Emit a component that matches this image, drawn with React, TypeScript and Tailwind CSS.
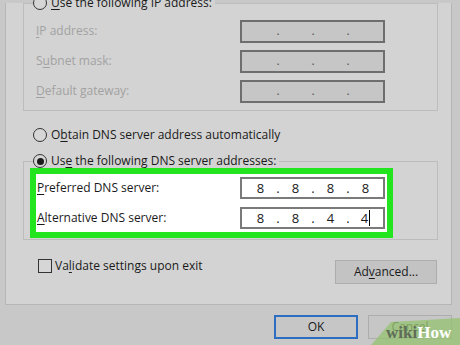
import React from "react";

function Radio({ checked }: { checked?: boolean }) {
  return (
    <span className="flex h-[14px] w-[14px] shrink-0 items-center justify-center rounded-full border border-[#333333] bg-[#d6d6d6]">
      {checked && <span className="h-[7px] w-[7px] rounded-full bg-[#1a1a1a]" />}
    </span>
  );
}

function U({ children }: { children: React.ReactNode }) {
  return <span className="underline decoration-1 underline-offset-2">{children}</span>;
}

function IpBox({ values, disabled }: { values: string[]; disabled?: boolean }) {
  return (
    <div
      className={
        disabled
          ? "flex h-[23px] w-[145px] items-center border-2 border-[#6e6e6e] bg-[#c6c6c6] pl-[1px] text-[#555555]"
          : "flex h-[22px] w-[145px] items-center border-2 border-[#7a7a7a] bg-white pl-[1px] text-[13px] text-[#1a1a1a]"
      }
    >
      {values.map((v, i) => (
        <React.Fragment key={i}>
          {i > 0 && <span className="flex w-0 justify-center leading-[16px]">.</span>}
          <span className="relative flex w-[35px] justify-center leading-[16px]">
            {v}
            {!disabled && i === 3 && values[3] === "4" && values[2] === "4" && (
              <span className="ml-[1px] h-[16px] w-[1px] bg-black" />
            )}
          </span>
        </React.Fragment>
      ))}
    </div>
  );
}

export default function App() {
  return (
    <div className="relative h-[345px] w-[460px] overflow-hidden bg-[#c8c8c8] font-['Open_Sans',sans-serif] text-[12px] leading-[16px] text-[#1a1a1a]">
      <div className="ml-[5px] h-[302px] w-[447px] border-x border-b border-[#b6b6b6] bg-[#d3d3d3]">
        {/* IP group */}
        <div className="ml-[17px] mt-[3px] h-[108px] w-[415px] border border-[#bcbcbc]">
          <div className="-mt-[9px] ml-[9px] flex h-[16px] w-fit items-center gap-[4px] bg-[#d3d3d3] pr-[3px]">
            <Radio />
            <span>
              <U>U</U>se the following IP address:
            </span>
          </div>
          <div className="mt-[5px] pl-[12px] text-[#a2a2a2]">
            <div className="flex h-[30px] items-center">
              <span className="w-[204px]">
                <U>I</U>P address:
              </span>
              <IpBox values={["", "", "", ""]} disabled />
            </div>
            <div className="flex h-[30px] items-center">
              <span className="w-[204px]">
                S<U>u</U>bnet mask:
              </span>
              <IpBox values={["", "", "", ""]} disabled />
            </div>
            <div className="flex h-[30px] items-center">
              <span className="w-[204px]">
                <U>D</U>efault gateway:
              </span>
              <IpBox values={["", "", "", ""]} disabled />
            </div>
          </div>
        </div>

        {/* Obtain DNS automatically */}
        <div className="ml-[27px] mt-[16px] flex h-[16px] items-center gap-[4px]">
          <Radio />
          <span>
            O<U>b</U>tain DNS server address automatically
          </span>
        </div>

        {/* DNS group */}
        <div className="ml-[17px] mt-[18px] h-[79px] w-[415px] border border-[#bcbcbc]">
          <div className="-mt-[9px] ml-[9px] flex h-[16px] w-fit items-center gap-[4px] bg-[#d3d3d3] pr-[3px]">
            <Radio checked />
            <span>
              Us<U>e</U> the following DNS server addresses:
            </span>
          </div>
          <div className="-mt-[1px] ml-[6px] flex h-[70px] w-[363px] flex-col gap-[8px] border-[6px] border-[#22e41f] bg-white pl-[1px] pt-[3px]">
            <div className="flex h-[22px] items-center">
              <span className="w-[203px]">
                <U>P</U>referred DNS server:
              </span>
              <IpBox values={["8", "8", "8", "8"]} />
            </div>
            <div className="flex h-[22px] items-center">
              <span className="w-[203px]">
                <U>A</U>lternative DNS server:
              </span>
              <IpBox values={["8", "8", "4", "4"]} />
            </div>
          </div>
        </div>

        {/* Validate + Advanced */}
        <div className="mt-[19px] flex justify-between">
          <div className="ml-[32px] flex h-[14px] items-center gap-[3px]">
            <span className="h-[14px] w-[14px] border border-[#333333] bg-[#d6d6d6]" />
            <span>
              Va<U>l</U>idate settings upon exit
            </span>
          </div>
          <button className="mr-[14px] mt-[1px] flex h-[24px] w-[102px] items-center justify-center border border-[#adadad] bg-[#c3c3c3]">
            <span>
              Ad<U>v</U>anced...
            </span>
          </button>
        </div>
      </div>

      {/* OK / Cancel */}
      <div className="mt-[10px] flex justify-end gap-[10px] pr-[8px]">
        <button className="flex h-[24px] w-[84px] items-center justify-center border-2 border-[#2d6ec2] bg-[#c6c6c6]">
          OK
        </button>
        <button className="flex h-[24px] w-[84px] items-center justify-center border border-[#adadad] bg-[#c6c6c6]">
          Cancel
        </button>
      </div>

      {/* wikiHow watermark */}
      <svg className="absolute left-0 top-0" width="460" height="345" viewBox="0 0 460 345">
        <polygon points="371,345 391,322 460,318 460,345" fill="#96c272" fillOpacity="0.78" />
      </svg>
      <div className="absolute left-[386px] top-[324px] flex font-['Liberation_Serif',serif] text-[17px] font-bold leading-[18px]">
        <span className="text-[#5f6c57]">wiki</span>
        <span className="text-white">How</span>
      </div>
    </div>
  );
}
